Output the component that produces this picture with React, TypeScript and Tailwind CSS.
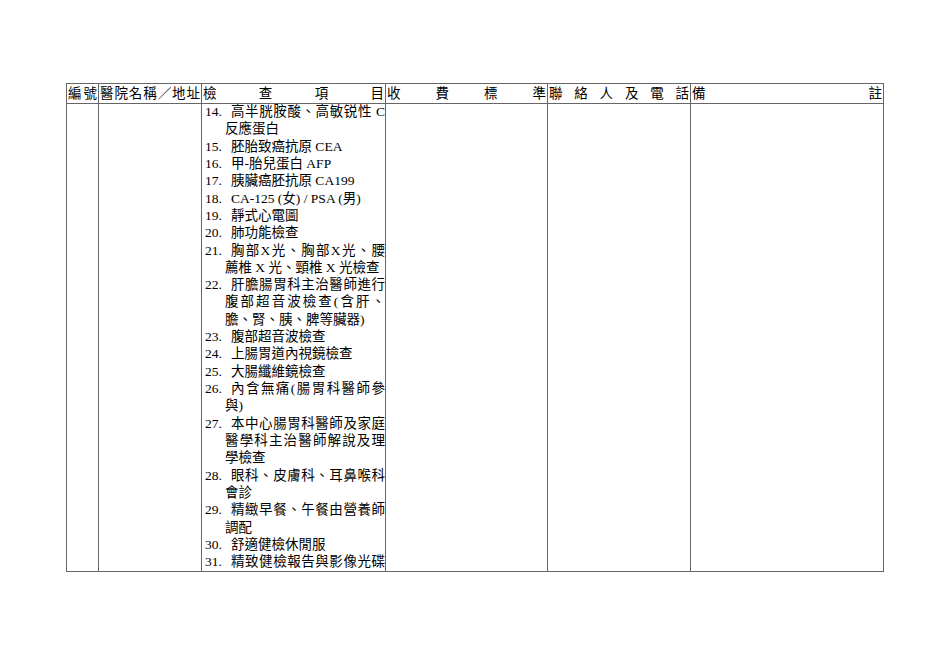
import React from "react";

type Item = { n: string; lines: string[]; justifyLast?: boolean };

const items: Item[] = [
  { n: "14.", lines: ["高半胱胺酸、高敏锐性 C", "反應蛋白"] },
  { n: "15.", lines: ["胚胎致癌抗原 CEA"] },
  { n: "16.", lines: ["甲-胎兒蛋白 AFP"] },
  { n: "17.", lines: ["胰臟癌胚抗原 CA199"] },
  { n: "18.", lines: ["CA-125 (女) / PSA (男)"] },
  { n: "19.", lines: ["靜式心電圖"] },
  { n: "20.", lines: ["肺功能檢查"] },
  { n: "21.", lines: ["胸部X光、胸部X光、腰", "薦椎 X 光、頸椎 X 光檢查"] },
  { n: "22.", lines: ["肝膽腸胃科主治醫師進行", "腹部超音波檢查(含肝、", "膽、腎、胰、脾等臟器)"] },
  { n: "23.", lines: ["腹部超音波檢查"] },
  { n: "24.", lines: ["上腸胃道內視鏡檢查"] },
  { n: "25.", lines: ["大腸纖維鏡檢查"] },
  { n: "26.", lines: ["內含無痛(腸胃科醫師參", "與)"] },
  { n: "27.", lines: ["本中心腸胃科醫師及家庭", "醫學科主治醫師解說及理", "學檢查"] },
  { n: "28.", lines: ["眼科、皮膚科、耳鼻喉科", "會診"] },
  { n: "29.", lines: ["精緻早餐、午餐由營養師", "調配"] },
  { n: "30.", lines: ["舒適健檢休閒服"] },
  { n: "31.", lines: ["精致健檢報告與影像光碟"], justifyLast: true },
];

function Spread({ text }: { text: string }) {
  return (
    <div className="flex justify-between">
      {Array.from(text).map((c, i) => (
        <span key={i}>{c}</span>
      ))}
    </div>
  );
}

export default function App() {
  const font = { fontFamily: '"Liberation Serif", "Noto Sans CJK TC", serif' };
  const th = "border border-[#666] px-[1px] py-0 font-normal";
  return (
    <div className="min-h-[672px] w-[950px] bg-white pl-[66px] pt-[83px] text-black" style={font}>
      <table className="table-fixed border-collapse text-[13.5px] leading-[17.32px] font-normal" style={{ width: 817 }}>
        <colgroup>
          <col style={{ width: 32 }} />
          <col style={{ width: 103 }} />
          <col style={{ width: 184 }} />
          <col style={{ width: 162 }} />
          <col style={{ width: 143 }} />
          <col style={{ width: 193 }} />
        </colgroup>
        <thead>
          <tr className="h-[20px]">
            <th className={th}>
              <Spread text="編號" />
            </th>
            <th className={th}>
              <Spread text="醫院名稱／地址" />
            </th>
            <th className={th}>
              <Spread text="檢查項目" />
            </th>
            <th className={th}>
              <Spread text="收費標準" />
            </th>
            <th className={th}>
              <Spread text="聯絡人及電話" />
            </th>
            <th className={th}>
              <Spread text="備註" />
            </th>
          </tr>
        </thead>
        <tbody>
          <tr>
            <td className="border border-[#666] p-0 align-top"></td>
            <td className="border border-[#666] p-0 align-top"></td>
            <td className="border border-[#666] pb-[1px] pl-[3px] pr-0 pt-0 align-top">
              <div className="-mt-[1px]">
                {items.map((it) => (
                  <div key={it.n}>
                    {it.lines.map((ln, i) => {
                      const justify = i < it.lines.length - 1 || it.justifyLast;
                      const cls = justify ? "text-justify [text-align-last:justify]" : "text-left";
                      if (i === 0) {
                        return (
                          <div key={i} className="flex">
                            <span className="inline-block w-[26px] shrink-0">{it.n}</span>
                            <span className={`block flex-1 whitespace-pre ${cls}`}>{ln}</span>
                          </div>
                        );
                      }
                      return (
                        <div key={i} className={`whitespace-pre pl-[20px] ${cls}`}>
                          {ln}
                        </div>
                      );
                    })}
                  </div>
                ))}
              </div>
            </td>
            <td className="border border-[#666] p-0 align-top"></td>
            <td className="border border-[#666] p-0 align-top"></td>
            <td className="border border-[#666] p-0 align-top"></td>
          </tr>
        </tbody>
      </table>
    </div>
  );
}
